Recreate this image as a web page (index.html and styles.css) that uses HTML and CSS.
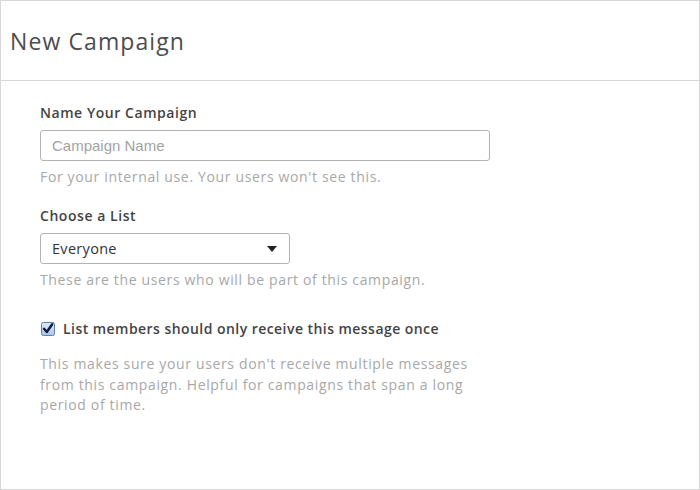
FILE: index.html
```html
<!DOCTYPE html>
<html>
<head>
<meta charset="utf-8">
<link rel="stylesheet" href="styles.css">
</head>
<body>
<div class="panel">
  <div class="header">
    <h1 class="title">New Campaign</h1>
  </div>
  <div class="form">
    <div class="field">
      <div class="label">Name Your Campaign</div>
      <div class="input"><span class="placeholder">Campaign Name</span></div>
      <div class="help">For your internal use. Your users won't see this.</div>
    </div>
    <div class="field">
      <div class="label">Choose a List</div>
      <div class="select">
        <span class="select-value">Everyone</span>
        <svg class="caret" width="10" height="6" viewBox="0 0 10 6"><path d="M0 0 L10 0 L5 6 Z" fill="#222"/></svg>
      </div>
      <div class="help">These are the users who will be part of this campaign.</div>
    </div>
    <div class="field">
      <div class="check-row">
        <svg class="checkbox" width="14" height="14" viewBox="0 0 14 14">
          <defs>
            <linearGradient id="cb" x1="0" y1="0" x2="0" y2="1">
              <stop offset="0" stop-color="#dfeaf8"/>
              <stop offset="1" stop-color="#a9c4e8"/>
            </linearGradient>
          </defs>
          <rect x="0.5" y="0.5" width="13" height="13" rx="2" fill="url(#cb)" stroke="#5b7fb3"/>
          <path d="M3 6.8 L5.8 10 L11.2 2.2" fill="none" stroke="#0f1d3a" stroke-width="2.4" stroke-linecap="round" stroke-linejoin="round"/>
        </svg>
        <span class="check-label">List members should only receive this message once</span>
      </div>
      <div class="help help-long">This makes sure your users don't receive multiple messages from this campaign. Helpful for campaigns that span a long period of time.</div>
    </div>
  </div>
</div>
</body>
</html>
```
FILE: styles.css
```css
html, body {
  margin: 0;
  padding: 0;
  background: #fff;
}
body {
  font-family: "Open Sans", Lato, sans-serif;
}
.panel {
  box-sizing: border-box;
  width: 700px;
  height: 490px;
  border: 1px solid #d8d8d8;
}
.header {
  box-sizing: border-box;
  height: 80px;
  border-bottom: 1px solid #d8d8d8;
  padding-left: 9px;
  display: flex;
  align-items: center;
}
.title {
  margin: 0;
  font-size: 23px;
  font-weight: 400;
  color: #4d4d4d;
  letter-spacing: 1.1px;
  line-height: 30px;
}
.form {
  padding: 22px 0 0 39px;
}
.field {
  margin-bottom: 19px;
}
.field:nth-child(2) {
  margin-bottom: 29px;
}
.label {
  font-size: 14px;
  line-height: 20px;
  font-weight: 600;
  color: #444;
  letter-spacing: 0.55px;
  margin-bottom: 7px;
}
.input, .select {
  box-sizing: border-box;
  height: 31px;
  border: 1px solid #b3b3b3;
  border-radius: 3px;
  display: flex;
  align-items: center;
}
.input {
  width: 450px;
  padding-left: 11px;
}
.placeholder {
  font-family: "Liberation Sans", Arial, sans-serif;
  font-size: 15px;
  color: #a3a3a3;
}
.select {
  width: 250px;
  padding: 0 12px 0 11px;
  justify-content: space-between;
}
.select-value {
  font-size: 14.5px;
  color: #333;
  letter-spacing: 0.3px;
}
.caret {
  display: block;
}
.help {
  margin-top: 6px;
  font-size: 14px;
  line-height: 20px;
  color: #a8a8a8;
  letter-spacing: 0.65px;
}
.help-long {
  margin-top: 15px;
  width: 440px;
  line-height: 20.5px;
}
.check-row {
  display: flex;
  align-items: center;
  gap: 8px;
  padding-left: 1px;
}
.checkbox {
  display: block;
}
.check-label {
  font-size: 14px;
  line-height: 20px;
  font-weight: 600;
  color: #444;
  letter-spacing: 0.45px;
}
```
